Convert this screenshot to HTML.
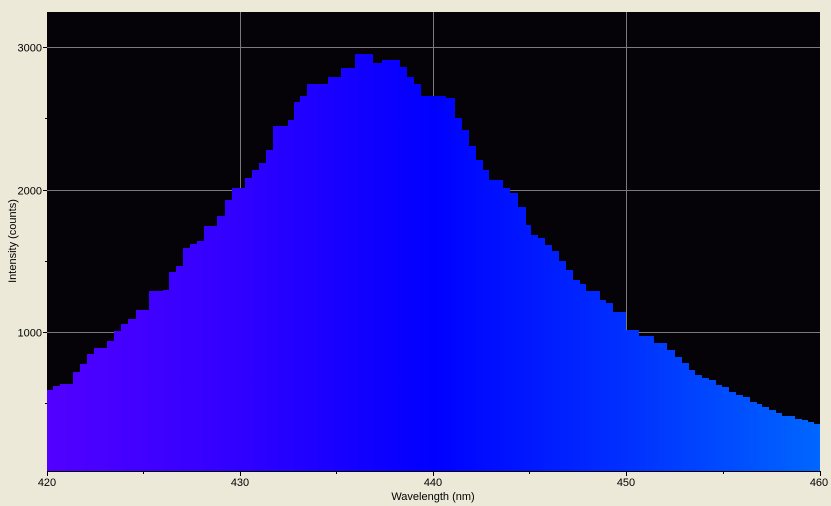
<!DOCTYPE html>
<html><head><style>
body{margin:0;width:831px;height:506px;background:#ECE9D8;overflow:hidden;font-family:"Liberation Sans",sans-serif;}
</style></head><body>
<svg width="831" height="506" xmlns="http://www.w3.org/2000/svg" style="position:absolute;left:0;top:0">
<defs>
<linearGradient id="g" x1="47" x2="820" y1="0" y2="0" gradientUnits="userSpaceOnUse">
<stop offset="0" stop-color="#5200FF"/>
<stop offset="0.25" stop-color="#3000FF"/>
<stop offset="0.5" stop-color="#0000FF"/>
<stop offset="0.75" stop-color="#0030FF"/>
<stop offset="1" stop-color="#0066FF"/>
</linearGradient>
</defs>
<rect x="47" y="12" width="773" height="459" fill="#050307"/>
<g stroke="#7a7a7a" stroke-width="1">
<line x1="47" x2="820" y1="47.5" y2="47.5"/>
<line x1="47" x2="820" y1="190.5" y2="190.5"/>
<line x1="47" x2="820" y1="332.5" y2="332.5"/>
<line x1="240.5" x2="240.5" y1="12" y2="471"/>
<line x1="433.5" x2="433.5" y1="12" y2="471"/>
<line x1="626.5" x2="626.5" y1="12" y2="471"/>
</g>
<path fill="url(#g)" d="M47,471 V390 H53 V386 H60 V384 H73 V372 H80 V364 H87 V354 H94 V348 H107 V341 H114 V331 H121 V324 H128 V319 H136 V310 H149 V291 H163 V290 H169 V272 H176 V266 H183 V248 H190 V244 H197 V241 H204 V226 H217 V216 H225 V200 H232 V188 H245 V178 H252 V170 H259 V163 H266 V150 H273 V126 H288 V120 H294 V102 H300 V96 H307 V84 H320 V84 H328 V77 H341 V68 H355 V54 H373 V63 H382 V60 H400 V67 H407 V77 H414 V84 H421 V96 H446 V98 H455 V118 H462 V130 H469 V146 H476 V160 H483 V170 H489 V180 H503 V188 H510 V193 H518 V207 H526 V225 H531 V235 H538 V238 H545 V245 H552 V251 H559 V261 H566 V270 H573 V280 H580 V284 H586 V291 H600 V300 H606 V303 H613 V312 H626 V330 H639 V336 H654 V343 H667 V350 H675 V357 H682 V363 H689 V370 H695 V375 H702 V378 H709 V380 H716 V385 H722 V387 H729 V392 H736 V395 H743 V397 H750 V402 H757 V404 H762 V407 H769 V410 H776 V413 H782 V416 H795 V419 H802 V420 H808 V422 H814 V424 H820 V471 Z"/>
<g stroke="#000" stroke-width="1">
<line x1="47" x2="821" y1="471.5" y2="471.5"/>
<line x1="43" x2="47" y1="47.5" y2="47.5"/>
<line x1="43" x2="47" y1="190.5" y2="190.5"/>
<line x1="43" x2="47" y1="332.5" y2="332.5"/>
<line x1="45" x2="47" y1="118.5" y2="118.5"/>
<line x1="45" x2="47" y1="261.5" y2="261.5"/>
<line x1="45" x2="47" y1="403.5" y2="403.5"/>
<line x1="47.5" x2="47.5" y1="471" y2="476"/>
<line x1="240.5" x2="240.5" y1="471" y2="476"/>
<line x1="433.5" x2="433.5" y1="471" y2="476"/>
<line x1="626.5" x2="626.5" y1="471" y2="476"/>
<line x1="820.5" x2="820.5" y1="471" y2="476"/>
<line x1="143.5" x2="143.5" y1="471" y2="474"/>
<line x1="336.5" x2="336.5" y1="471" y2="474"/>
<line x1="529.5" x2="529.5" y1="471" y2="474"/>
<line x1="723.5" x2="723.5" y1="471" y2="474"/>
</g>
<g font-size="11" fill="#000" font-family="Liberation Sans, sans-serif">
<text x="42" y="51.5" text-anchor="end">3000</text>
<text x="42" y="194.5" text-anchor="end">2000</text>
<text x="42" y="336.5" text-anchor="end">1000</text>
<text x="47" y="486" text-anchor="middle">420</text>
<text x="240" y="486" text-anchor="middle">430</text>
<text x="433" y="486" text-anchor="middle">440</text>
<text x="626" y="486" text-anchor="middle">450</text>
<text x="819" y="486" text-anchor="middle">460</text>
<text x="433" y="500" text-anchor="middle">Wavelength (nm)</text>
<text x="0" y="0" text-anchor="middle" transform="translate(16,241) rotate(-90)">Intensity (counts)</text>
</g>
</svg>
</body></html>
